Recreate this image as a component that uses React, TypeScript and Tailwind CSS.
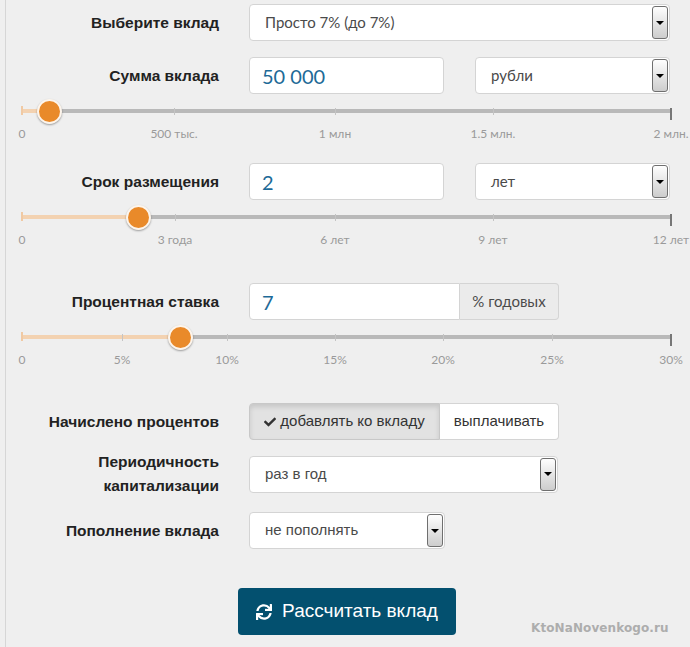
import React from 'react';
import { FaCheck, FaSync } from 'react-icons/fa';

const arial = "font-['Liberation_Sans',Arial,sans-serif]";
const lato = "font-['Lato','Open_Sans',sans-serif]";

interface Tick {
  pos: number;
  label: string;
}

const Arrow: React.FC = () => (
  <div className="w-[16px] self-stretch my-[1px] mr-[1px] rounded-[3px] border border-[#6f6f6f] bg-linear-to-b from-[#fefefe] to-[#cdcdcd] flex items-center justify-center shrink-0">
    <div className="w-0 h-0 border-l-[4px] border-r-[4px] border-t-[4px] border-l-transparent border-r-transparent border-t-black" />
  </div>
);

const Select: React.FC<{ value: string; width: string; font?: string }> = ({ value, width, font = lato }) => (
  <div className={`${width} h-[37px] flex items-stretch bg-white border border-[#d4d4d4] rounded-[4px]`}>
    <div className={`flex-1 flex items-center pl-[15px] text-[15px] text-[#4a4a4a] ${font}`}>{value}</div>
    <Arrow />
  </div>
);

const NumInput: React.FC<{ value: string; width: string; rounded?: string }> = ({ value, width, rounded = 'rounded-[4px]' }) => (
  <div className={`${width} h-[37px] flex items-center bg-white border border-[#d4d4d4] ${rounded} pl-[12px] text-[20px] text-[#1d6a97] ${lato}`}>
    {value}
  </div>
);

const Label: React.FC<{ children: React.ReactNode }> = ({ children }) => (
  <div className={`w-[213px] text-right text-[15.5px] font-bold text-[#222] leading-[24px] ${arial}`}>{children}</div>
);

// track is 649px wide, starting at x=22
const Slider: React.FC<{ ticks: Tick[]; thumb: number; height: string }> = ({ ticks, thumb, height }) => (
  <div className={`relative ml-[16px] w-[649px] ${height}`}>
    <div className="absolute left-0 right-0 top-[15px] h-[4px] bg-[#b9b9b9]" />
    <div className="absolute left-0 top-[15px] h-[4px] bg-[#f3d2b1]" style={{ width: thumb }} />
    {ticks.map((t, i) => {
      const first = i === 0;
      const last = i === ticks.length - 1;
      return (
        <React.Fragment key={t.label}>
          <div
            className={
              first
                ? 'absolute top-[12px] w-[2px] h-[9px] bg-[#f0c9a3]'
                : last
                ? 'absolute top-[14px] w-[2px] h-[12px] bg-[#777]'
                : 'absolute top-[14px] w-[1px] h-[7px] bg-[#c4c4c4]'
            }
            style={{ left: t.pos - (first || last ? 1 : 0) }}
          />
          <div
            className={`absolute top-[33px] -translate-x-1/2 whitespace-nowrap text-[12px] leading-[14px] text-[#9a9a9a] ${lato}`}
            style={{ left: t.pos }}
          >
            {t.label}
          </div>
        </React.Fragment>
      );
    })}
    <div
      className="absolute top-[5px] w-[25px] h-[25px] rounded-full bg-[#e98a2a] border-2 border-[#fdf5ec] shadow-[0_1px_2px_rgba(0,0,0,0.35)]"
      style={{ left: thumb - 12 }}
    />
  </div>
);

const sumTicks: Tick[] = [
  { pos: 0, label: '0' },
  { pos: 152, label: '500 тыс.' },
  { pos: 313, label: '1 млн' },
  { pos: 471, label: '1.5 млн.' },
  { pos: 649, label: '2 млн.' },
];

const termTicks: Tick[] = [
  { pos: 0, label: '0' },
  { pos: 153, label: '3 года' },
  { pos: 313, label: '6 лет' },
  { pos: 471, label: '9 лет' },
  { pos: 649, label: '12 лет' },
];

const rateTicks: Tick[] = [
  { pos: 0, label: '0' },
  { pos: 100, label: '5%' },
  { pos: 205, label: '10%' },
  { pos: 313, label: '15%' },
  { pos: 421, label: '20%' },
  { pos: 530, label: '25%' },
  { pos: 649, label: '30%' },
];

export default function App() {
  return (
    <div className="relative w-[690px] h-[647px] bg-[#efefef] overflow-hidden">
      <div className="ml-[5px] border-l border-[#d6d6d6] h-full pt-[4px]">
        {/* вклад */}
        <div className="flex items-center">
          <Label>Выберите вклад</Label>
          <div className="ml-[30px]">
            <Select value="Просто 7% (до 7%)" width="w-[421px]" />
          </div>
        </div>

        {/* сумма */}
        <div className="flex items-center mt-[16px]">
          <Label>Сумма вклада</Label>
          <div className="ml-[30px] flex gap-[31px]">
            <NumInput value="50 000" width="w-[195px]" />
            <Select value="рубли" width="w-[195px]" />
          </div>
        </div>
        <Slider ticks={sumTicks} thumb={27} height="h-[69px]" />

        {/* срок */}
        <div className="flex items-center">
          <Label>Срок размещения</Label>
          <div className="ml-[30px] flex gap-[31px]">
            <NumInput value="2" width="w-[195px]" />
            <Select value="лет" width="w-[195px]" />
          </div>
        </div>
        <Slider ticks={termTicks} thumb={116} height="h-[83px]" />

        {/* ставка */}
        <div className="flex items-center">
          <Label>Процентная ставка</Label>
          <div className="ml-[30px] flex">
            <NumInput value="7" width="w-[211px]" rounded="rounded-l-[4px]" />
            <div className={`w-[99px] h-[37px] flex items-center justify-center bg-[#ebebeb] border border-l-0 border-[#d4d4d4] rounded-r-[4px] text-[15px] text-[#4a4a4a] ${lato}`}>
              % годовых
            </div>
          </div>
        </div>
        <Slider ticks={rateTicks} thumb={158} height="h-[83px]" />

        {/* начисление */}
        <div className="flex items-center">
          <Label>Начислено процентов</Label>
          <div className={`ml-[30px] flex text-[15px] text-[#333] ${arial}`}>
            <div className="w-[191px] h-[37px] flex items-center justify-center gap-[4px] bg-[#e2e2e2] border border-[#c8c8c8] rounded-l-[4px] shadow-[inset_0_3px_5px_rgba(0,0,0,0.12)]">
              <FaCheck className="w-[12px] h-[12px] text-[#333]" />
              добавлять ко вкладу
            </div>
            <div className="w-[119px] h-[37px] flex items-center justify-center bg-white border border-l-0 border-[#d4d4d4] rounded-r-[4px]">
              выплачивать
            </div>
          </div>
        </div>

        {/* периодичность */}
        <div className="flex items-center mt-[10px]">
          <Label>
            Периодичность
            <br />
            капитализации
          </Label>
          <div className="ml-[30px]">
            <Select value="раз в год" width="w-[309px]" font={arial} />
          </div>
        </div>

        {/* пополнение */}
        <div className="flex items-center mt-[14px]">
          <Label>Пополнение вклада</Label>
          <div className="ml-[30px]">
            <Select value="не пополнять" width="w-[196px]" font={arial} />
          </div>
        </div>

        <div className="mt-[39px] ml-[232px]">
          <button className={`w-[218px] h-[47px] flex items-center justify-center gap-[10px] bg-[#03506f] rounded-[4px] text-white text-[19px] ${arial}`}>
            <FaSync className="w-[16px] h-[16px]" />
            Рассчитать вклад
          </button>
        </div>
      </div>

      <div className="absolute left-[531px] top-[619px] text-[12px] font-bold text-[#adadad] font-['DejaVu_Sans',Verdana,sans-serif] tracking-[0.1px]">
        KtoNaNovenkogo.ru
      </div>
    </div>
  );
}
